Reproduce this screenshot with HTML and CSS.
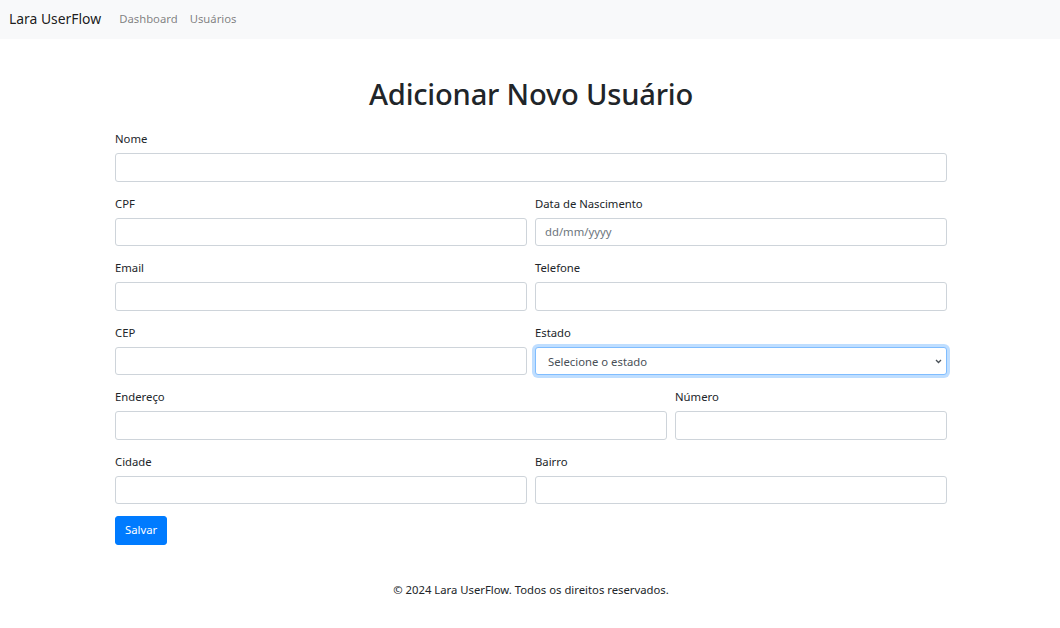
FILE: index.html
```html
<!DOCTYPE html>
<html lang="pt-br">
<head>
<meta charset="utf-8">
<title>Lara UserFlow</title>
<link rel="stylesheet" href="styles.css">
</head>
<body>
<nav class="navbar">
  <a class="brand" href="#">Lara UserFlow</a>
  <ul class="nav-links">
    <li><a href="#">Dashboard</a></li>
    <li><a href="#">Usuários</a></li>
  </ul>
</nav>
<main class="container">
  <h1 class="title">Adicionar Novo Usuário</h1>
  <form class="form">
    <div class="group">
      <label>Nome</label>
      <input class="control" type="text">
    </div>
    <div class="row half">
      <div class="group"><label>CPF</label><input class="control" type="text"></div>
      <div class="group"><label>Data de Nascimento</label><input class="control date" type="text" placeholder="dd/mm/yyyy"></div>
    </div>
    <div class="row half">
      <div class="group"><label>Email</label><input class="control" type="text"></div>
      <div class="group"><label>Telefone</label><input class="control" type="text"></div>
    </div>
    <div class="row half">
      <div class="group"><label>CEP</label><input class="control" type="text"></div>
      <div class="group"><label>Estado</label>
        <div class="control select focused">
          <span>Selecione o estado</span>
          <svg class="chev" width="7" height="5" viewBox="0 0 7 5"><path d="M1 1 L3.5 3.5 L6 1" fill="none" stroke="#495057" stroke-width="1.3"/></svg>
        </div>
      </div>
    </div>
    <div class="row wide">
      <div class="group"><label>Endereço</label><input class="control" type="text"></div>
      <div class="group"><label>Número</label><input class="control" type="text"></div>
    </div>
    <div class="row half">
      <div class="group"><label>Cidade</label><input class="control" type="text"></div>
      <div class="group"><label>Bairro</label><input class="control" type="text"></div>
    </div>
    <button class="btn" type="button">Salvar</button>
  </form>
</main>
<footer class="footer">© 2024 Lara UserFlow. Todos os direitos reservados.</footer>
</body>
</html>
```
FILE: styles.css
```css
* { box-sizing: border-box; }
body {
  margin: 0;
  font-family: "Noto Sans", "Open Sans", sans-serif;
  color: #212529;
  background: #fff;
  font-size: 11.3px;
  line-height: 18px;
}
.navbar {
  height: 39px;
  background: #f8f9fa;
  display: flex;
  align-items: center;
  padding: 0 9px;
}
.brand {
  font-size: 13.9px;
  color: rgba(0,0,0,.9);
  text-decoration: none;
  margin-right: 12px;
  margin-top: -2px;
}
.nav-links {
  list-style: none;
  margin: 0;
  padding: 0;
  display: flex;
  margin-top: -2px;
}
.nav-links a {
  display: block;
  padding: 0 6px;
  color: rgba(0,0,0,.5);
  text-decoration: none;
  font-size: 11.3px;
}
.container {
  width: 832px;
  margin: 37px 0 0 calc(50% - 415px);
}
.title {
  font-size: 29.1px;
  font-weight: 500;
  line-height: 36px;
  text-align: center;
  margin: 0 0 17px;
  letter-spacing: -0.2px;
}
.group { margin-bottom: 12px; }
.group label {
  display: block;
  padding-top: 1px;
  margin-bottom: 5px;
  line-height: 18px;
}
.row { display: grid; column-gap: 8px; }
.row.half { grid-template-columns: 1fr 1fr; }
.row.wide { grid-template-columns: 552px 1fr; }
.control {
  display: block;
  width: 100%;
  height: 28.5px;
  border: 1px solid #ced4da;
  border-radius: 3px;
  background: #fff;
  padding: 0 9px;
  font: inherit;
  color: #495057;
  outline: none;
}
.date::placeholder { color: #6c757d; }
.select {
  display: flex;
  align-items: center;
  justify-content: space-between;
  padding: 2px 4px 0 12px;
}
.focused {
  border-color: #80bdff;
  box-shadow: 0 0 0 3px rgba(0,123,255,.25);
}
.chev { display: block; }
.btn {
  display: block;
  background: #007bff;
  border: 1px solid #007bff;
  color: #fff;
  font: inherit;
  border-radius: 3px;
  height: 28.5px;
  padding: 0 9px;
  margin-top: 0;
}
.footer {
  text-align: center;
  margin-top: 36px;
  padding-left: 2px;
}
```
